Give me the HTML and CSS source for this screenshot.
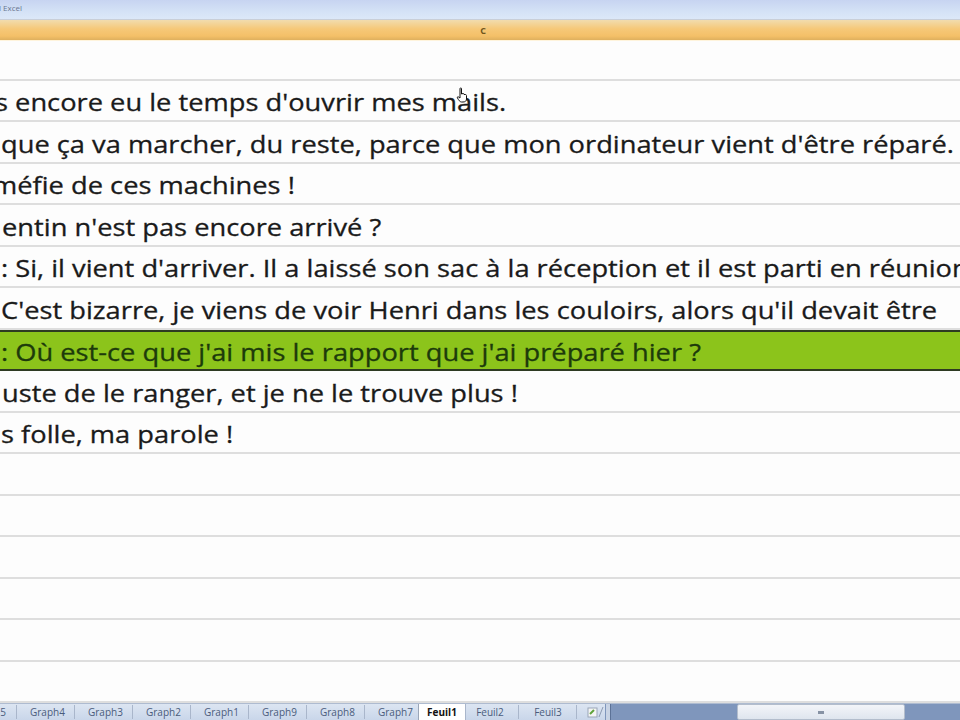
FILE: index.html
```html
<!DOCTYPE html>
<html lang="fr">
<head>
<meta charset="utf-8">
<title>Excel</title>
<link rel="stylesheet" href="styles.css">
</head>
<body>
<div class="app">
  <div class="titlebar"><span class="title">l Excel</span></div>
  <div class="colheader"><span class="colname">C</span></div>
  <div class="sheet">
    <div class="row first"></div>
    <div class="row"><span class="cell shift-s">s encore eu le temps d'ouvrir mes mails.</span></div>
    <div class="row"><span class="cell shift-q">que ça va marcher, du reste, parce que mon ordinateur vient d'être réparé.</span></div>
    <div class="row"><span class="cell shift-m">méfie de ces machines !</span></div>
    <div class="row"><span class="cell shift-e">entin n'est pas encore arrivé ?</span></div>
    <div class="row"><span class="cell shift-c">: Si, il vient d'arriver. Il a laissé son sac à la réception et il est parti en réunion.</span></div>
    <div class="row"><span class="cell shift-cc">C'est bizarre, je viens de voir Henri dans les couloirs, alors qu'il devait être</span></div>
    <div class="row selected"><span class="cell shift-c">: Où est-ce que j'ai mis le rapport que j'ai préparé hier ?</span></div>
    <div class="row"><span class="cell shift-u">uste de le ranger, et je ne le trouve plus !</span></div>
    <div class="row"><span class="cell shift-s2">s folle, ma parole !</span></div>
    <div class="row"></div>
    <div class="row"></div>
    <div class="row"></div>
    <div class="row"></div>
    <div class="row"></div>
    <div class="row"></div>
  </div>
  <div class="tabbar">
    <div class="tabs">
      <span class="tab cut">5</span>
      <span class="tab">Graph4</span>
      <span class="tab">Graph3</span>
      <span class="tab">Graph2</span>
      <span class="tab">Graph1</span>
      <span class="tab">Graph9</span>
      <span class="tab">Graph8</span>
      <span class="tab">Graph7</span>
      <span class="tab active">Feuil1</span>
      <span class="tab">Feuil2</span>
      <span class="tab">Feuil3</span>
      <span class="newsheet">
        <svg width="18" height="12" viewBox="0 0 18 12"><rect x="1" y="2" width="9" height="9" fill="#f4f4f4" stroke="#9aa6b8"/><path d="M3 8 L7 4" stroke="#5fa33a" stroke-width="2"/><path d="M12 11 L16 1" stroke="#8d9bb3" stroke-width="1"/></svg>
      </span>
    </div>
    <div class="hscroll">
      <span class="splitter"></span>
      <span class="track"><span class="thumb"><span class="grip"></span></span></span>
    </div>
  </div>
  <svg class="cursor" width="12" height="16" viewBox="0 0 12 16"><path d="M4 1.5 C4 0.8 5.5 0.8 5.5 1.5 L5.5 7 L7 6.5 C8 6.5 8 7 8 7.5 L9.5 7.5 C10.5 7.5 10.5 8.5 10.5 9 L10.5 12 C10.5 14 9 15 7 15 L5.5 15 C4 15 2.5 13 1.5 11 C1 10 1.8 9.3 2.6 10 L4 11 Z" fill="#fff" stroke="#111" stroke-width="1"/></svg>
</div>
</body>
</html>
```
FILE: styles.css
```css
html, body {
  margin: 0;
  padding: 0;
  background: #fdfdfd;
}
.app {
  position: relative;
  width: 960px;
  height: 720px;
  overflow: hidden;
  display: flex;
  flex-direction: column;
  font-family: "Open Sans", "Liberation Sans", sans-serif;
}
.titlebar {
  height: 20px;
  flex: none;
  background: linear-gradient(#c7d4f1, #d4e2f6 60%, #dce8f8);
  border-bottom: 1px solid #c9cfd8;
  box-sizing: border-box;
  display: flex;
  align-items: center;
}
.title {
  font-size: 8px;
  color: #6a7690;
  margin-left: -1px;
  margin-top: -4px;
}
.colheader {
  height: 21px;
  flex: none;
  box-sizing: border-box;
  background: linear-gradient(#f1dcae, #f6c878 45%, #f4c068 80%, #dfb05e);
  border-bottom: 1px solid #fff4dc;
  display: flex;
  justify-content: center;
  align-items: center;
}
.colname {
  font-size: 9px;
  font-weight: 700;
  color: #6f561d;
  margin-left: 6px;
}
.sheet {
  flex: none;
  height: 662px;
  display: grid;
  grid-template-rows: 39.5px repeat(15, 41.5px);
  background: #fdfdfd;
}
.row {
  box-sizing: border-box;
  border-bottom: 2px solid #dedede;
  display: flex;
  align-items: center;
  white-space: nowrap;
  overflow: hidden;
}
.cell {
  font-size: 24px;
  color: #1a1a1a;
  -webkit-text-stroke: 0.3px currentColor;
  padding-top: 3px;
  transform: scaleX(1.136);
  transform-origin: 0 50%;
}
.row.selected {
  background: #8cc41b;
  border-top: 2px solid #2e3b22;
  border-bottom: 2px solid #2e3b22;
}
.row.selected .cell {
  color: #1d3b0b;
}
.shift-s { margin-left: -5px; }
.shift-q { margin-left: 1px; }
.shift-m { margin-left: -8px; }
.shift-e { margin-left: 2px; }
.shift-c { margin-left: 1px; }
.shift-cc { margin-left: 1px; }
.shift-u { margin-left: 2px; }
.shift-s2 { margin-left: 1px; }

.tabbar {
  flex: 1;
  display: flex;
  background: linear-gradient(#dce5f2, #c9d6ea);
  border-top: 1px solid #aebbd0;
}
.tabs {
  display: flex;
  align-items: center;
  width: 605px;
  flex: none;
}
.tab {
  font-size: 10px;
  color: #4a5c7c;
  padding: 0 12px 0 13px;
  width: 32px;
  text-align: center;
  border-right: 1px solid #a9b6cb;
}
.tab.cut {
  width: 6px;
  padding: 0 10px 0 0;
}
.tab.active {
  background: #ffffff;
  color: #111;
  font-weight: 700;
  align-self: stretch;
  display: flex;
  align-items: center;
  justify-content: center;
  border-left: 1px solid #9aa6b8;
  width: 36px;
  padding: 0 5px;
  margin-left: -5px;
}
.tab.active + .tab {
  padding-left: 8px;
}
.newsheet {
  padding-left: 10px;
  display: flex;
  align-items: center;
}
.hscroll {
  flex: 1;
  display: flex;
  background: #7f96bc;
}
.splitter {
  width: 4px;
  margin-left: 1px;
  background: #c8d3e4;
  border-right: 1px solid #5c7297;
}
.track {
  flex: 1;
  padding-left: 126px;
  padding-right: 55px;
  display: flex;
}
.thumb {
  flex: 1;
  background: linear-gradient(#f3f5f9, #dfe5ee);
  border: 1px solid #b3bdcc;
  border-radius: 2px;
  display: flex;
  justify-content: center;
  align-items: center;
}
.grip {
  width: 6px;
  height: 3px;
  background: #8792a4;
}
.cursor {
  position: absolute;
  left: 456px;
  top: 87px;
}
```
